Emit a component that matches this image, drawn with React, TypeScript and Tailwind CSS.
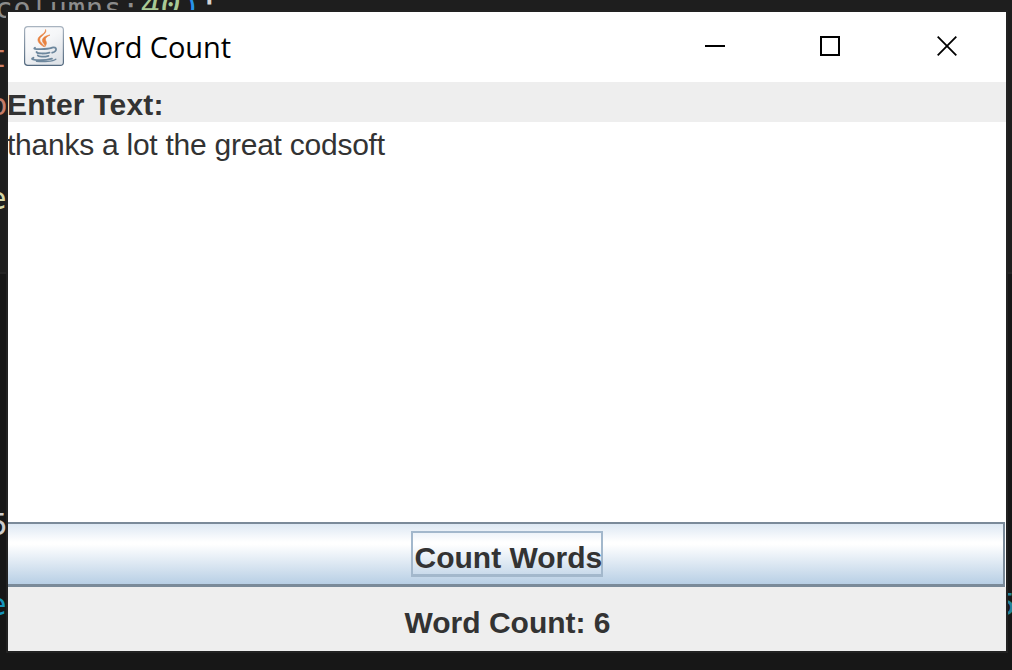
import type { ReactNode } from 'react';

function JavaIcon() {
  return (
    <svg className="h-10 w-10 shrink-0" viewBox="0 0 40 40" fill="none">
      <defs>
        <linearGradient id="tile" x1="0" y1="0" x2="0.6" y2="1">
          <stop offset="0" stopColor="#fdfdfe" />
          <stop offset="0.5" stopColor="#f5f6f8" />
          <stop offset="1" stopColor="#dfe3e8" />
        </linearGradient>
        <linearGradient id="edge" x1="0" y1="0" x2="0" y2="1">
          <stop offset="0" stopColor="#a9b4c0" />
          <stop offset="1" stopColor="#52687e" />
        </linearGradient>
      </defs>
      <rect x="0.6" y="0.6" width="38.8" height="38.8" rx="3.2" fill="url(#tile)" stroke="url(#edge)" strokeWidth="1.2" />
      <g fill="#e8823f" stroke="#e8823f" strokeWidth="0.6" strokeLinejoin="round">
        <path d="M21.600 3.500c1.800 4.600-6.300 6.600-5.900 10.400.2 2.400 3.600 4.200 4.600 7-3.400-1.700-6.900-4.700-6.300-7.800.8-3.900 7.900-5.300 7.600-9.600z" />
        <path d="M26 9c-3.500 1.700-5 3.200-4.500 5 .5 1.600 2.200 3-.7 6.800.7-2.600-2.300-3.800-2.400-6.300-.1-3 3.600-4.900 7.600-5.500z" />
      </g>
      <g stroke="#6d879d" strokeLinecap="round" strokeWidth="1.800">
        <path d="M11 21.700c-2 1.200 0 1.500 6 1.400 4.500 0 8-.3 10.500-1.200" />
        <path d="M28 21.600c5.300-1.200 5.500 3.600.2 5.100" />
        <path d="M12.500 26c.8 1.700 7.700 2 13 .6" />
        <path d="M13.800 29.400c.8 1.500 6.300 1.800 10.700.4" />
        <path d="M9.500 31.800c-6 2.200 8.500 3.700 18.500.9" />
        <path d="M12.500 35.300c7 .8 16.500.2 19.300-2" strokeWidth="1.400" />
      </g>
    </svg>
  );
}

function CodeFragment({ className, children }: { className: string; children: ReactNode }) {
  return (
    <span className={`absolute whitespace-pre font-['DejaVu_Sans_Mono',monospace] leading-[36px] ${className}`}>
      {children}
    </span>
  );
}

function EditorBackdrop() {
  return (
    <div className="absolute inset-0 overflow-hidden bg-[#1e1e1e]">
      <div className="absolute inset-x-0 top-[272px] bottom-0 border-t-2 border-[#242424] bg-[#171717]" />
      <CodeFragment className="-top-[10px] -left-[5px] text-[29px] tracking-[0.7px] text-[#8c8c8c]">columns:</CodeFragment>
      <CodeFragment className="-top-[12px] left-[141px] text-[33px] italic text-[#a9c995]">40</CodeFragment>
      <CodeFragment className="-top-[12px] left-[182px] text-[31px] text-[#2794ec]">)</CodeFragment>
      <CodeFragment className="-top-[13px] left-[200px] text-[31px] text-[#d4d4d4]">;</CodeFragment>
      <CodeFragment className="top-[38px] -left-[12px] text-[31px] text-[#ce8065]">t</CodeFragment>
      <CodeFragment className="top-[86px] -left-[11px] text-[31px] text-[#c57d68]">o</CodeFragment>
      <CodeFragment className="top-[180px] -left-[12px] text-[31px] text-[#d6d6a6]">e</CodeFragment>
      <CodeFragment className="top-[506px] -left-[11px] text-[31px] text-[#cccccc]">5</CodeFragment>
      <CodeFragment className="top-[586px] -left-[12px] text-[31px] text-[#1595bd]">e</CodeFragment>
      <CodeFragment className="top-[586px] left-[997px] text-[31px] text-[#23839a]">5</CodeFragment>
    </div>
  );
}

function TitleBar() {
  return (
    <header className="flex h-[70px] shrink-0 items-center bg-white pb-0.5 pl-4">
      <JavaIcon />
      <h1 className="relative top-px ml-[5px] whitespace-nowrap font-['Open_Sans',sans-serif] text-[29px] leading-10 tracking-[-0.1px] text-black">
        Word Count
      </h1>
      <div className="ml-auto flex pr-px text-black">
        <button aria-label="Minimize" className="flex h-[68px] w-[116px] items-center justify-center">
          <svg className="h-5 w-5" viewBox="0 0 20 20"><path d="M0 10h20" stroke="currentColor" strokeWidth="2" /></svg>
        </button>
        <button aria-label="Maximize" className="flex h-[68px] w-[114px] items-center justify-center">
          <svg className="h-5 w-5" viewBox="0 0 20 20"><path d="M1 1h18v18H1z" fill="none" stroke="currentColor" strokeWidth="2" /></svg>
        </button>
        <button aria-label="Close" className="flex h-[68px] w-[118px] items-center justify-center pl-0.5">
          <svg className="h-5 w-5" viewBox="0 0 20 20"><path d="M.7.7l18.600 18.600M19.300.7L.7 19.300" fill="none" stroke="currentColor" strokeWidth="1.800" /></svg>
        </button>
      </div>
    </header>
  );
}

export default function App() {
  return (
    <main className="relative h-[670px] w-[1012px] overflow-hidden pt-3 pl-2 font-['Liberation_Sans',Arial,sans-serif] text-[30px] text-[#333333]">
      <EditorBackdrop />
      <section className="relative flex h-[639px] w-[998px] flex-col bg-white shadow-[0_0_0_2px_#222222]">
        <TitleBar />
        <label className="flex h-10 shrink-0 items-center whitespace-nowrap bg-[#eeeeee] pt-[5px] font-bold leading-[35px] tracking-[0.2px]">
          <span className="-ml-[1px]">Enter Text:</span>
        </label>
        <div className="h-[400px] shrink-0 bg-white pt-[5px] leading-[35px]">
          <p className="-ml-[1px] whitespace-nowrap tracking-[-0.25px]">thanks a lot the great codsoft</p>
        </div>
        <button className="mr-px flex h-[65px] shrink-0 items-start justify-center border-t-2 border-r-2 border-b-3 border-[#7a8a99] bg-[linear-gradient(to_bottom,#dde8f3_0%,#ffffff_30%,#ffffff_34%,#b8cfe5_100%)] pt-[7px] pl-0.5 font-bold">
          <span className="flex h-[46px] w-[192px] justify-start whitespace-nowrap border-2 border-b-3 border-[#a3b8cc] pt-[5px] pl-0.5 leading-[40px]">
            Count Words
          </span>
        </button>
        <div className="h-[64px] shrink-0 bg-[#eeeeee] pl-px text-center font-bold leading-[71px]">Word Count: 6</div>
      </section>
    </main>
  );
}
